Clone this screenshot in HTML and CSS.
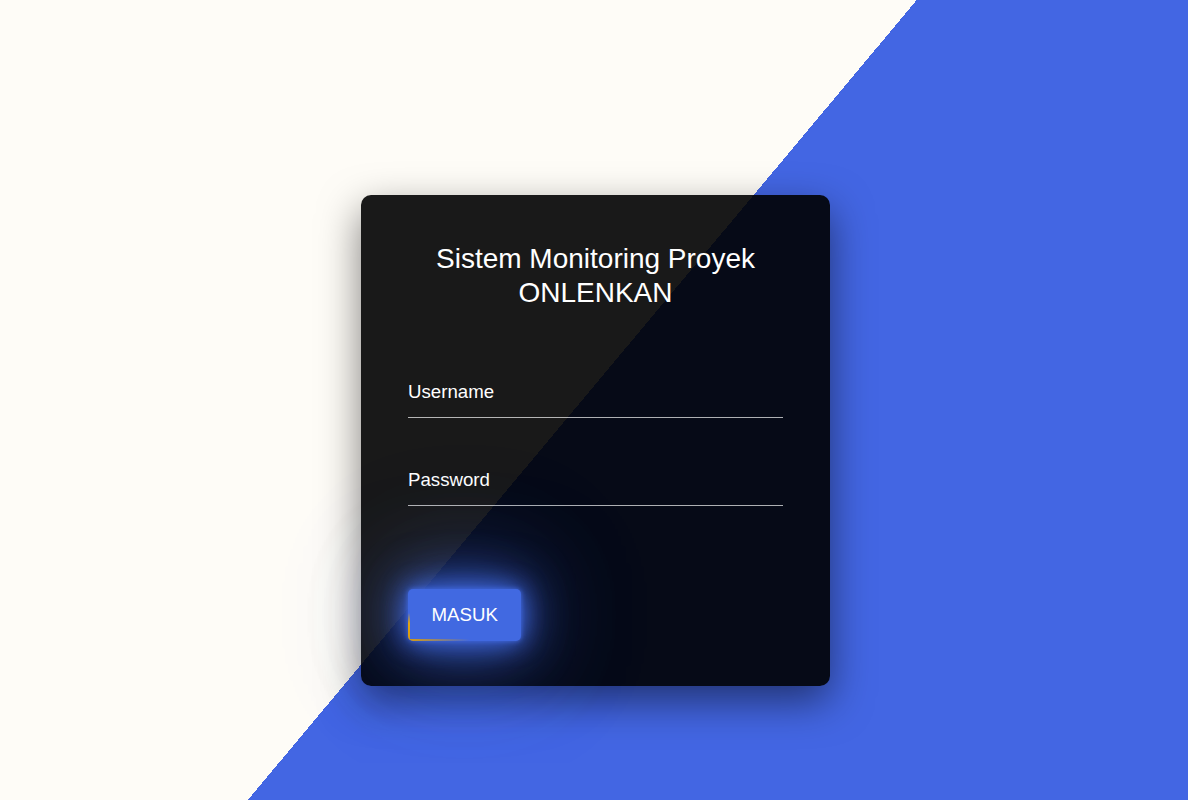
FILE: index.html
```html
<!DOCTYPE html>
<html lang="id">
<head>
<meta charset="utf-8">
<title>Sistem Monitoring Proyek ONLENKAN</title>
<link rel="stylesheet" href="styles.css">
</head>
<body>
  <main class="login-box">
    <h2 class="title">Sistem Monitoring Proyek<br>ONLENKAN</h2>
    <form class="form">
      <div class="field">
        <input class="input" type="text" placeholder="Username">
      </div>
      <div class="field">
        <input class="input" type="password" placeholder="Password">
      </div>
      <button class="btn" type="button">
        <span class="line line-left"></span>
        <span class="line line-bottom"></span>
        MASUK
      </button>
    </form>
  </main>
</body>
</html>
```
FILE: styles.css
```css
html, body {
  margin: 0;
  padding: 0;
  height: 100%;
}
body {
  font-family: "Liberation Sans", Arial, sans-serif;
  background: linear-gradient(129.9deg, #fefcf7 calc(50% - 9px), #4366e3 calc(50% - 9px));
  overflow: hidden;
}
.login-box {
  box-sizing: border-box;
  width: 469px;
  height: 491px;
  margin: 195px 0 0 361px;
  padding: 47px 47px 46px;
  background: rgba(0, 0, 0, 0.9);
  border-radius: 10px;
  box-shadow: 0 15px 40px rgba(0, 0, 0, 0.5);
  display: flex;
  flex-direction: column;
}
.title {
  margin: 0;
  color: #fff;
  font-weight: normal;
  font-size: 28px;
  line-height: 34px;
  text-align: center;
}
.form {
  display: flex;
  flex-direction: column;
  align-items: flex-start;
  margin-top: 61px;
}
.field {
  width: 100%;
  margin-bottom: 41px;
}
.input {
  box-sizing: border-box;
  width: 100%;
  padding: 10px 0 14px;
  border: none;
  border-bottom: 1px solid rgba(255, 255, 255, 0.68);
  background: transparent;
  color: #fff;
  font-family: inherit;
  font-size: 18.67px;
  outline: none;
}
.input::placeholder {
  color: #fff;
  opacity: 1;
}
.btn {
  position: relative;
  overflow: hidden;
  margin-top: 42px;
  padding: 15px 23.5px;
  border: none;
  border-radius: 5px;
  background: #4169e1;
  color: #fff;
  font-family: inherit;
  font-size: 18.67px;
  line-height: 22px;
  box-shadow: 0 0 5px #4169e1, 0 0 25px #4169e1, 0 0 50px #4169e1, 0 0 100px rgba(65, 105, 225, 0.7), 0 0 150px rgba(65, 105, 225, 0.3);
}
.line {
  position: absolute;
  display: block;
}
.line-left {
  left: 0;
  bottom: 2px;
  width: 2px;
  height: 26px;
  background: linear-gradient(180deg, transparent, #e0a412 40%, #d89c10);
}
.line-bottom {
  left: 0;
  bottom: 0;
  width: 62px;
  height: 2px;
  background: linear-gradient(90deg, #d89c10, transparent);
}
```
